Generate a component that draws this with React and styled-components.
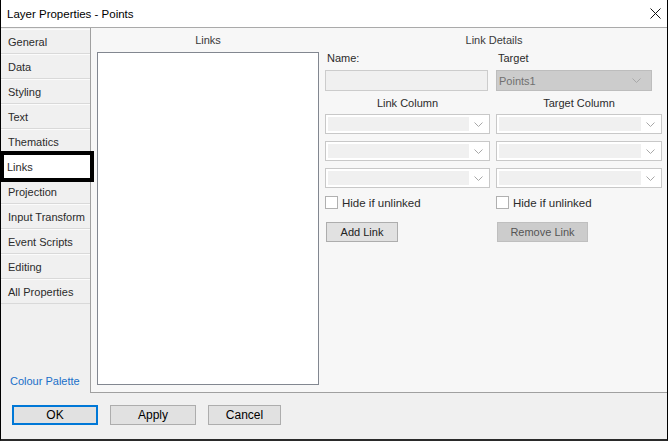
import React from 'react'
import styled, { createGlobalStyle } from 'styled-components'

const GlobalStyle = createGlobalStyle`
  html, body {
    margin: 0;
    padding: 0;
    background: #ffffff;
  }
  body {
    font-family: "Liberation Sans", Arial, sans-serif;
    font-size: 11px;
    color: #222;
  }
`

const tabs = [
  'General',
  'Data',
  'Styling',
  'Text',
  'Thematics',
  'Links',
  'Projection',
  'Input Transform',
  'Event Scripts',
  'Editing',
  'All Properties',
]

function Chevron() {
  return (
    <svg width="9" height="5" viewBox="0 0 9 5">
      <polyline points="0.5,0.5 4.5,4.5 8.5,0.5" fill="none" stroke="#a8a8a8" strokeWidth="1" />
    </svg>
  )
}

function Combo() {
  return (
    <ComboBox>
      <ComboFill />
      <ComboArrow>
        <Chevron />
      </ComboArrow>
    </ComboBox>
  )
}

function Check({ label }) {
  return (
    <CheckRow>
      <CheckBox />
      <span>{label}</span>
    </CheckRow>
  )
}

export default function App() {
  return (
    <>
      <GlobalStyle />
      <Window>
        <TitleBar>
          <span>Layer Properties - Points</span>
          <svg width="11" height="11" viewBox="0 0 11 11">
            <path d="M0.5 0.5 L10.5 10.5 M10.5 0.5 L0.5 10.5" stroke="#111" strokeWidth="1" />
          </svg>
        </TitleBar>
        <Body>
          <Sidebar>
            <TabList>
              {tabs.map((t) => (
                <Tab key={t} $active={t === 'Links'}>
                  {t}
                </Tab>
              ))}
            </TabList>
            <PaletteLink>Colour Palette</PaletteLink>
          </Sidebar>
          <Panel>
            <LinksColumn>
              <SectionTitle>Links</SectionTitle>
              <ListBox />
            </LinksColumn>
            <DetailsColumn>
              <SectionTitle>Link Details</SectionTitle>
              <FieldGrid>
                <FieldColumn>
                  <FieldLabel>Name:</FieldLabel>
                  <TextInput $width={163} />
                  <ColumnTitle>Link Column</ColumnTitle>
                  <Combo />
                  <Combo />
                  <Combo />
                  <Check label="Hide if unlinked" />
                  <Button $width={72}>Add Link</Button>
                </FieldColumn>
                <FieldColumn>
                  <FieldLabel>Target</FieldLabel>
                  <SelectBox>
                    <span>Points1</span>
                    <Chevron />
                  </SelectBox>
                  <ColumnTitle>Target Column</ColumnTitle>
                  <Combo />
                  <Combo />
                  <Combo />
                  <Check label="Hide if unlinked" />
                  <Button $width={91} $disabled>
                    Remove Link
                  </Button>
                </FieldColumn>
              </FieldGrid>
            </DetailsColumn>
          </Panel>
        </Body>
        <Footer>
          <DialogButton $width={86} $primary>
            OK
          </DialogButton>
          <DialogButton $width={86}>Apply</DialogButton>
          <DialogButton $width={73}>Cancel</DialogButton>
        </Footer>
      </Window>
    </>
  )
}

const Window = styled.div`
  width: 668px;
  height: 441px;
  box-sizing: border-box;
  display: flex;
  flex-direction: column;
  background: #f0f0f0;
  border-left: 1px solid #000;
  border-right: 1px solid #000;
  border-bottom: 2px solid #2a2a2a;
`
const TitleBar = styled.div`
  height: 27px;
  flex: none;
  background: #ffffff;
  border-bottom: 1px solid #aaaaaa;
  display: flex;
  align-items: center;
  justify-content: space-between;
  padding: 0 6px 0 6px;
  font-size: 11.5px;
  color: #000;
`
const Body = styled.div`
  flex: 1;
  display: flex;
  min-height: 0;
`
const Sidebar = styled.div`
  width: 89px;
  flex: none;
  display: flex;
  flex-direction: column;
  justify-content: space-between;
  padding-top: 1px;
  box-sizing: border-box;
`
const TabList = styled.div`
  display: flex;
  flex-direction: column;
`
const Tab = styled.div`
  position: relative;
  height: 25px;
  box-sizing: border-box;
  padding-left: ${(p) => (p.$active ? '6px' : '7px')};
  display: flex;
  align-items: center;
  background: ${(p) => (p.$active ? '#ffffff' : '#f0f0f0')};
  border-top: 1px solid #fbfbfb;
  border-bottom: 1px solid #d9d9d9;
  color: #2b2b2b;
  white-space: nowrap;
  ${(p) =>
    p.$active &&
    `
    z-index: 2;
    &::before {
      content: '';
      position: absolute;
      top: -4px;
      bottom: -4px;
      left: -1px;
      right: -4px;
      border: 4px solid #000;
      pointer-events: none;
    }
  `}
`
const PaletteLink = styled.div`
  padding: 0 0 5px 9px;
  line-height: 14px;
  color: #1a6fc9;
`
const Panel = styled.div`
  flex: 1;
  display: flex;
  gap: 6px;
  background: #f7f7f7;
  border-left: 1px solid #a0a0a0;
  border-bottom: 1px solid #a0a0a0;
  padding: 0 4px 7px 6px;
`
const LinksColumn = styled.div`
  width: 222px;
  flex: none;
  display: flex;
  flex-direction: column;
`
const SectionTitle = styled.div`
  height: 24px;
  line-height: 24px;
  text-align: center;
  color: #3a3a3a;
`
const ListBox = styled.div`
  flex: 1;
  background: #ffffff;
  border: 1px solid #828790;
`
const DetailsColumn = styled.div`
  flex: 1;
  display: flex;
  flex-direction: column;
`
const FieldGrid = styled.div`
  display: grid;
  grid-template-columns: 165px 166px;
  column-gap: 6px;
`
const FieldColumn = styled.div`
  display: flex;
  flex-direction: column;
  align-items: stretch;
`
const FieldLabel = styled.div`
  line-height: 12px;
  padding-left: 2px;
  margin-bottom: 6px;
  color: #2b2b2b;
`
const TextInput = styled.div`
  width: ${(p) => p.$width}px;
  height: 21px;
  box-sizing: border-box;
  background: #f0f0f0;
  border: 1px solid #cccccc;
`
const SelectBox = styled.div`
  width: 156px;
  height: 21px;
  box-sizing: border-box;
  background: #cccccc;
  border: 1px solid #bdbdbd;
  display: flex;
  align-items: center;
  justify-content: space-between;
  padding: 0 10px 0 2px;
  color: #707070;
`
const ColumnTitle = styled.div`
  line-height: 14px;
  margin: 5px 0 4px;
  text-align: center;
  color: #2b2b2b;
`
const ComboBox = styled.div`
  height: 20px;
  box-sizing: border-box;
  background: #ffffff;
  border: 1px solid #c8c8c8;
  padding: 2px;
  display: flex;
  margin-bottom: 7px;
`
const ComboFill = styled.div`
  flex: 1;
  background: #f0f0f0;
`
const ComboArrow = styled.div`
  width: 18px;
  display: flex;
  align-items: center;
  justify-content: center;
`
const CheckRow = styled.div`
  display: flex;
  align-items: center;
  gap: 4px;
  height: 13px;
  margin-top: 1px;
  color: #2b2b2b;
  font-size: 11.5px;
`
const CheckBox = styled.div`
  width: 13px;
  height: 13px;
  box-sizing: border-box;
  background: #ffffff;
  border: 1px solid #b0b0b0;
`
const Button = styled.div`
  width: ${(p) => p.$width}px;
  height: 20px;
  box-sizing: border-box;
  margin: 13px 0 0 1px;
  display: flex;
  align-items: center;
  justify-content: center;
  background: ${(p) => (p.$disabled ? '#cccccc' : '#e1e1e1')};
  border: 1px solid ${(p) => (p.$disabled ? '#bfbfbf' : '#adadad')};
  color: ${(p) => (p.$disabled ? '#555555' : '#222222')};
`
const Footer = styled.div`
  flex: none;
  height: 46px;
  box-sizing: border-box;
  display: flex;
  align-items: flex-start;
  gap: 12px;
  padding: 12px 0 0 11px;
`
const DialogButton = styled.div`
  width: ${(p) => p.$width}px;
  height: 20px;
  box-sizing: border-box;
  display: flex;
  align-items: center;
  justify-content: center;
  background: #e1e1e1;
  border: ${(p) => (p.$primary ? '2px solid #0078d7' : '1px solid #adadad')};
  color: #000;
  font-size: 12px;
`
